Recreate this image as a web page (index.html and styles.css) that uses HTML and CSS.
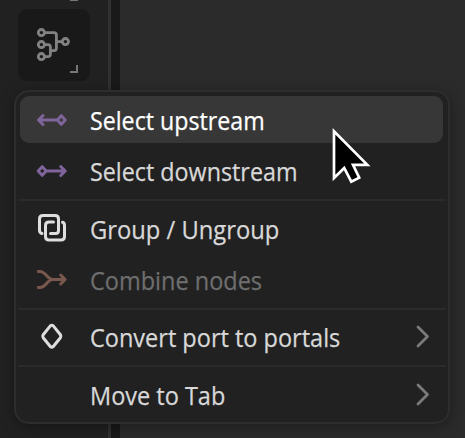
FILE: index.html
```html
<!DOCTYPE html>
<html lang="en">
<head>
<meta charset="utf-8">
<title>Node menu</title>
<link rel="stylesheet" href="styles.css">
</head>
<body>
<div class="app">
  <aside class="toolbar">
    <div class="tool tool-prev"><i class="corner"></i></div>
    <div class="tool">
      <svg class="tool-icon" width="34" height="34" viewBox="0 0 34 34">
        <circle cx="5.4" cy="4.6" r="3.1"/><circle cx="5.4" cy="16.6" r="3.1"/><circle cx="5.4" cy="28.6" r="3.1"/><circle cx="29.4" cy="13.6" r="3.1"/>
        <path d="M8.5 4.6H18Q20.4 4.6 20.4 7V20Q20.4 22.6 18 22.6H14.4M8.5 16.6H12Q14.4 16.6 14.4 19V26Q14.4 28.6 12 28.6H8.5M20.4 13.6H26.3"/>
      </svg>
      <i class="corner"></i>
    </div>
  </aside>
  <div class="divider"></div>
  <main class="canvas"></main>
</div>
<nav class="menu">
  <div class="item active">
    <svg class="icon purple" viewBox="0 0 32 32"><path d="M20.5 16H3M7 11.5L2.5 16L7 20.5M25.3 11.7L29.3 16L25.3 20.3L21.3 16Z"/></svg>
    <span class="label upstream">Select upstream</span>
  </div>
  <div class="item">
    <svg class="icon purple" viewBox="0 0 32 32"><path d="M11 16H29M24.7 11.5L29.2 16L24.7 20.5M6.2 11.7L10.2 16L6.2 20.3L2.2 16Z"/></svg>
    <span class="label downstream">Select downstream</span>
  </div>
  <div class="separator wide"></div>
  <div class="item">
    <svg class="icon" viewBox="0 0 32 32"><path d="M6 20.5Q3.5 20 3.5 17V6Q3.5 2.5 7 2.5H19Q22.5 2.5 22.5 6V17.5Q22.5 20.5 19.5 20.5H14.5M17.5 9H13Q9.5 9 9.5 12.5V23.5Q9.5 27 13 27H25Q28.5 27 28.5 23.5V12.5Q28.5 9.8 26.5 9.3"/></svg>
    <span class="label group">Group / Ungroup</span>
  </div>
  <div class="item disabled">
    <svg class="icon brown" viewBox="0 0 32 32"><path d="M2.3 7.5H4C10 7.5 11 15.5 17 15.5H29M2.3 23.5H4C10 23.5 11 15.5 17 15.5M24.7 11L29.2 15.5L24.7 20"/></svg>
    <span class="label combine">Combine nodes</span>
  </div>
  <div class="separator"></div>
  <div class="item">
    <svg class="icon" viewBox="0 0 32 32"><path d="M14.3 4.9Q15.8 3.6 17.3 4.9L24.4 13.7Q25.4 15.2 24.4 16.7L17.3 25.5Q15.8 26.8 14.3 25.5L7.2 16.7Q6.2 15.2 7.2 13.7Z"/></svg>
    <span class="label convert">Convert port to portals</span>
    <svg class="chevron" width="14" height="24" viewBox="0 0 14 24"><path d="M2 2L11.5 11.5L2 21"/></svg>
  </div>
  <div class="separator"></div>
  <div class="item">
    <span class="icon"></span>
    <span class="label move">Move to Tab</span>
    <svg class="chevron" width="14" height="24" viewBox="0 0 14 24"><path d="M2 2L11.5 11.5L2 21"/></svg>
  </div>
</nav>
<svg class="cursor" width="44" height="62" viewBox="0 0 44 62"><path d="M4 4.2V51L14.2 41L21.3 54.6L29.2 50.7L23 37.8H37.3Z"/></svg>
</body>
</html>
```
FILE: styles.css
```css
* { box-sizing: border-box; }
body {
  margin: 0;
  width: 465px;
  height: 438px;
  overflow: hidden;
  background: #2b2b2b;
  font-family: "Open Sans", "Noto Sans", sans-serif;
}
.app { display: flex; height: 438px; }
.toolbar {
  width: 108px;
  padding-left: 18px;
  background: #212121;
}
.tool {
  position: relative;
  width: 72px;
  height: 72px;
  padding: 19px 0 0 18px;
  border-radius: 9px;
  background: #191919;
}
.tool-prev { height: 1px; margin-bottom: 7.5px; background: none; padding: 0; }
.tool-icon { display: block; fill: none; stroke: #828282; stroke-width: 2.8; }
.corner {
  position: absolute;
  right: 12px;
  bottom: 8px;
  width: 8px;
  height: 8px;
  border: solid #777;
  border-width: 0 2px 2px 0;
}
.tool-prev .corner { bottom: 0; height: 2px; }
.divider { width: 12px; background: #191919; border-left: 3px solid #303030; }
.canvas { flex: 1; background: #2b2b2b; }
.menu {
  position: absolute;
  left: 14px;
  top: 90px;
  display: flex;
  flex-direction: column;
  width: 436px;
  height: 334px;
  padding: 2px 5px 2px 4px;
  border: 2px solid #2d2d2d;
  border-radius: 15px;
  background: #212121;
  box-shadow: 0 3px 14px rgba(0, 0, 0, 0.35);
}
.item {
  display: flex;
  flex: none;
  align-items: center;
  height: 47px;
  margin: 2px 0;
  padding: 0 13px 0 16px;
  border-radius: 9px;
  color: #d8d8d8;
}
.active { background: #373737; color: #fff; }
.disabled { color: #6e6e6e; }
.icon {
  flex: none;
  width: 32px;
  height: 32px;
  fill: none;
  stroke: #dedede;
  stroke-width: 3;
  stroke-linecap: round;
  stroke-linejoin: round;
}
.purple { stroke: #80649c; }
.brown { stroke: #79584d; }
.label {
  flex: 1;
  margin-left: 22px;
  font-size: 25px;
  line-height: 34px;
  white-space: nowrap;
  -webkit-text-stroke: 0.25px currentColor;
  transform: scaleX(0.94);
  transform-origin: left;
}
.upstream { transform: scaleX(0.928); }
.downstream { transform: scaleX(0.932); }
.group { transform: scaleX(0.95); }
.separator { flex: none; height: 2px; margin: 2px -3px 2.4px -2px; background: #2b2b2b; }
.wide { margin-top: 3px; margin-bottom: 2.5px; }
.chevron { fill: none; stroke: #7b7b7b; stroke-width: 2.8; stroke-linecap: round; stroke-linejoin: round; }
.cursor {
  position: absolute;
  left: 330px;
  top: 127px;
  fill: #000;
  stroke: #fff;
  stroke-width: 2.7;
  stroke-miterlimit: 10;
}
```
